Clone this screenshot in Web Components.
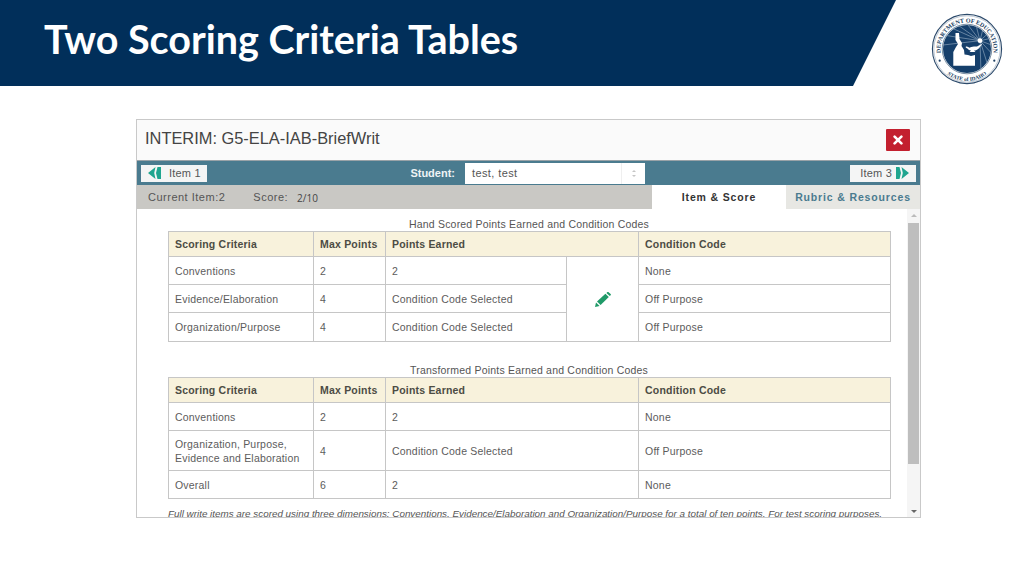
<!DOCTYPE html>
<html lang="en">
<head>
<meta charset="utf-8">
<title>Two Scoring Criteria Tables</title>
<style>
  html, body { margin: 0; padding: 0; background: #fff; }
  body { width: 1024px; height: 576px; overflow: hidden; font-family: "Liberation Sans", Arial, sans-serif; }
  main { display: block; padding: 33px 0 0 136px; }
</style>
</head>
<body>
<slide-header>Two Scoring Criteria Tables</slide-header>
<main>
  <scoring-window title-text="INTERIM: G5-ELA-IAB-BriefWrit">
    <score-table edit-cell data-rows='[["Conventions","2","2","None",28],["Evidence/Elaboration","4","Condition Code Selected","Off Purpose",28],["Organization/Purpose","4","Condition Code Selected","Off Purpose",29]]'>Hand Scored Points Earned and Condition Codes</score-table>
    <score-table class="second" data-rows='[["Conventions","2","2","None",28],["Organization, Purpose,<br>Evidence and Elaboration","4","Condition Code Selected","Off Purpose",40],["Overall","6","2","None",28]]'>Transformed Points Earned and Condition Codes</score-table>
    <p slot="note">Full write items are scored using three dimensions: Conventions, Evidence/Elaboration and Organization/Purpose for a total of ten points. For test scoring purposes,</p>
  </scoring-window>
</main>

<script>
const headerTemplate = document.createElement('template');
headerTemplate.innerHTML = `
  <style>
    :host { display: flex; width: 1024px; height: 86px; }
    .band {
      flex: 0 0 896px;
      box-sizing: border-box;
      padding: 14px 0 0 44px;
      background: #012f5a;
      color: #fff;
      clip-path: polygon(0 0, 100% 0, 853px 100%, 0 100%);
      font: 700 39.5px/50px Lato, sans-serif;
    }
    idaho-seal { margin: 13px 0 0 35px; }
  </style>
  <div class="band"><slot></slot></div>
  <idaho-seal></idaho-seal>
`;

class SlideHeader extends HTMLElement {
  constructor() {
    super();
    this.attachShadow({ mode: 'open' });
    this.shadowRoot.appendChild(headerTemplate.content.cloneNode(true));
  }
}

const sealTemplate = document.createElement('template');
sealTemplate.innerHTML = `
  <style>
    :host { display: block; width: 72px; height: 72px; }
    svg { display: block; }
    text { font-family: "Liberation Serif", serif; font-weight: 700; fill: #1d3f63; }
  </style>
  <svg width="72" height="72" viewBox="0 0 72 72">
    <defs>
      <path id="arc-top" d="M10.4 42.9 A26.5 26.5 0 1 1 61.6 42.9"/>
      <path id="arc-bottom" d="M12.2 57.4 A32 32 0 0 0 59.8 57.4"/>
      <clipPath id="disc"><circle cx="36" cy="36" r="24"/></clipPath>
    </defs>
    <circle cx="36" cy="36" r="34.6" fill="#fff" stroke="#2c4a6b" stroke-width="1.1"/>
    <circle cx="36" cy="36" r="33.2" fill="none" stroke="#7f93a8" stroke-width=".5"/>
    <text font-size="6.1"><textPath href="#arc-top" startOffset="50%" text-anchor="middle">DEPARTMENT OF EDUCATION</textPath></text>
    <text font-size="5.4"><textPath href="#arc-bottom" startOffset="50%" text-anchor="middle">STATE of IDAHO</textPath></text>
    <circle cx="8.7" cy="47.7" r="1.1" fill="#1d3f63"/>
    <circle cx="63.3" cy="47.7" r="1.1" fill="#1d3f63"/>
    <circle cx="36" cy="36" r="24.8" fill="#fff" stroke="#1d3f63" stroke-width=".6"/>
    <circle cx="36" cy="36" r="24" fill="#153f6b"/>
    <g clip-path="url(#disc)" stroke="#a9bdd0" stroke-width=".55">
      <path d="M49 27.7 L14 12 M49 27.7 L24 10 M49 27.7 L34 8 M49 27.7 L44 8 M49 27.7 L54 8 M49 27.7 L64 14 M49 27.7 L66 24 M49 27.7 L66 34 M49 27.7 L64 44 M49 27.7 L58 56 M49 27.7 L50 60 M49 27.7 L12 22 M49 27.7 L12 32"/>
    </g>
    <circle cx="49" cy="27.7" r="2.4" fill="#fff"/>
    <path d="M24.5 20 L28 20 L28.5 26 L31 30 L30.5 33 L33 37 L33.5 41.5 L37 42 L40 43 L44 42 L44 52.7 L22.3 52.7 L22.3 39 L25 34 L27 31 L24.5 27 Z" fill="#fff"/>
    <path d="M34.5 34 C36.5 32.6 37.5 35 39 34.6 C41 33.4 44 33.6 46 33.6 L51.5 30.6 L48 35.2 C46.5 36.8 44.5 37.6 43 37.6 L44.5 39 L38.5 39 L40 37.5 C38 37 37 36.2 36.4 35.4 C35.8 35 35 35 34.5 34 Z" fill="#fff"/>
  </svg>
`;

class IdahoSeal extends HTMLElement {
  constructor() {
    super();
    this.attachShadow({ mode: 'open' });
    this.shadowRoot.appendChild(sealTemplate.content.cloneNode(true));
  }
}

const itemButtonTemplate = document.createElement('template');
itemButtonTemplate.innerHTML = `
  <style>
    :host { display: block; width: 66px; height: 17px; }
    button {
      display: flex;
      align-items: center;
      gap: 8px;
      width: 100%;
      height: 100%;
      padding: 0 0 0 7px;
      border: 0;
      background: #f4f5f5;
      color: #555;
      font: 11px "Liberation Sans", sans-serif;
      letter-spacing: .2px;
      white-space: nowrap;
    }
    :host([dir-next]) button { justify-content: flex-end; gap: 4px; padding: 0 7px 0 0; }
    svg { flex: none; }
  </style>
  <button><slot></slot></button>
`;

class ItemButton extends HTMLElement {
  constructor() {
    super();
    this.attachShadow({ mode: 'open' });
    this.shadowRoot.appendChild(itemButtonTemplate.content.cloneNode(true));
    const next = this.hasAttribute('dir-next');
    const arrows = next
      ? '<path d="M0 0 L3.5 0 L5 6 L3.5 12 L0 12 Z M5.5 0 L13 6 L5.5 12 L6.8 6 Z"/>'
      : '<path d="M13 0 L9.5 0 L8 6 L9.5 12 L13 12 Z M7.5 0 L0 6 L7.5 12 L6.2 6 Z"/>';
    const icon = `<svg width="13" height="12" viewBox="0 0 13 12" fill="#1fa58f">${arrows}</svg>`;
    this.shadowRoot.querySelector('button').insertAdjacentHTML(next ? 'beforeend' : 'afterbegin', icon);
  }
}

const windowTemplate = document.createElement('template');
windowTemplate.innerHTML = `
  <style>
    :host {
      display: flex;
      flex-direction: column;
      box-sizing: border-box;
      width: 785px;
      height: 399px;
      border: 1px solid #c9c9c9;
      overflow: hidden;
      color: #555;
      font-family: "Liberation Sans", sans-serif;
    }
    .title {
      display: flex;
      justify-content: space-between;
      align-items: center;
      flex: 0 0 41px;
      box-sizing: border-box;
      padding: 0 10px 4px 8px;
      background: #fafafa;
      border-bottom: 1px solid #9aa3a8;
    }
    h2 { margin: 0; font-size: 16.4px; font-weight: 400; color: #444; }
    .close {
      display: flex;
      align-items: center;
      justify-content: center;
      width: 24px;
      height: 22px;
      margin-top: 3px;
      background: #c3202f;
      border-radius: 1px;
    }
    .nav {
      display: flex;
      align-items: center;
      flex: 0 0 24px;
      padding: 0 4px;
      background: #4a7b8f;
    }
    .student {
      margin-left: auto;
      color: #eef3f5;
      font-size: 11px;
      font-weight: 700;
    }
    .input {
      display: flex;
      align-items: center;
      justify-content: space-between;
      box-sizing: border-box;
      width: 180px;
      height: 21px;
      margin: 0 205px 0 10px;
      padding: 0 0 0 7px;
      background: #fff;
      font-size: 11px;
      letter-spacing: .4px;
    }
    .spin {
      display: flex;
      flex-direction: column;
      align-items: center;
      justify-content: center;
      gap: 3px;
      width: 24px;
      height: 100%;
      box-sizing: border-box;
      border-left: 1px solid #efefef;
    }
    .spin i { display: block; width: 0; height: 0; border: solid transparent; border-width: 2px 2.5px 0; border-top-color: #c6c6c6; }
    .spin i:first-child { border-width: 0 2.5px 2px; border-bottom-color: #c6c6c6; }
    .status {
      display: flex;
      align-items: stretch;
      flex: 0 0 24px;
      background: #c9c8c4;
      font-size: 11px;
      letter-spacing: .5px;
    }
    .status .facts { display: flex; align-items: center; flex: 1; padding-left: 11px; }
    .status .score-label { margin-left: 28px; }
    .status .score { margin: 2px 0 0 9px; font: 10px "Open Sans", sans-serif; color: #444; letter-spacing: 0; }
    .tab {
      display: flex;
      align-items: center;
      justify-content: center;
      width: 134px;
      font-weight: 700;
      font-size: 10.5px;
      letter-spacing: .85px;
    }
    .tab.on { background: #fff; color: #333; }
    .tab.off { background: #e7e7e3; color: #4a7b8f; }
    .body { display: flex; flex: 1; min-height: 0; }
    .content { flex: 1; min-width: 0; padding: 9px 0 0 31px; overflow: hidden; }
    ::slotted(score-table) { margin-bottom: 22px; }
    ::slotted(p) {
      margin: -13px 0 0;
      width: 730px;
      white-space: nowrap;
      font-size: 9.85px;
      font-style: italic;
      line-height: 12px;
    }
    .track {
      display: flex;
      flex-direction: column;
      align-items: center;
      flex: 0 0 13px;
      background: #f5f5f5;
      padding-top: 5px;
    }
    .up, .down { width: 0; height: 0; border: solid transparent; border-width: 0 3px; flex: none; }
    .up { border-bottom: 3px solid #bbb; }
    .down { margin-top: auto; margin-bottom: 4px; border-width: 3px 3px 0; border-top-color: #666; }
    .thumb { flex: 0 0 241px; align-self: stretch; margin: 6px 1px 0 1px; background: #bebebe; }
  </style>
  <div class="title">
    <h2></h2>
    <div class="close">
      <svg width="10" height="10" viewBox="0 0 10 10"><path d="M1.6 1.6 L8.4 8.4 M8.4 1.6 L1.6 8.4" stroke="#fff" stroke-width="2.6" stroke-linecap="round"/></svg>
    </div>
  </div>
  <div class="nav">
    <item-button>Item 1</item-button>
    <span class="student">Student:</span>
    <div class="input"><span>test, test</span><span class="spin"><i></i><i></i></span></div>
    <item-button dir-next>Item 3</item-button>
  </div>
  <div class="status">
    <div class="facts"><span>Current Item:2</span><span class="score-label">Score:</span><span class="score">2/10</span></div>
    <div class="tab on">Item &amp; Score</div>
    <div class="tab off">Rubric &amp; Resources</div>
  </div>
  <div class="body">
    <div class="content"><slot></slot><slot name="note"></slot></div>
    <div class="track"><span class="up"></span><span class="thumb"></span><span class="down"></span></div>
  </div>
`;

class ScoringWindow extends HTMLElement {
  constructor() {
    super();
    this.attachShadow({ mode: 'open' });
    this.shadowRoot.appendChild(windowTemplate.content.cloneNode(true));
  }

  connectedCallback() {
    this.shadowRoot.querySelector('h2').textContent = this.getAttribute('title-text');
  }
}

const tableTemplate = document.createElement('template');
tableTemplate.innerHTML = `
  <style>
    :host { display: block; width: 722px; color: #5c5c5c; font-family: "Liberation Sans", sans-serif; }
    .caption {
      height: 13px;
      text-align: center;
      font-size: 10.5px;
      line-height: 12px;
      letter-spacing: .2px;
      color: #555;
    }
    table { width: 722px; table-layout: fixed; border-collapse: collapse; font-size: 10.5px; letter-spacing: .2px; }
    th, td { box-sizing: border-box; padding: 0 6px; border: 1px solid #c6c6c6; text-align: left; line-height: 14px; }
    th { height: 25px; background: #f8f2dc; font-weight: 700; color: #4c4c44; }
    .edit { text-align: center; padding: 0; }
    .edit svg { display: inline-block; vertical-align: middle; }
  </style>
  <div class="caption"><slot></slot></div>
  <table>
    <colgroup><col style="width:145px"><col style="width:72px"><col style="width:181px"><col style="width:72px"><col style="width:252px"></colgroup>
    <thead><tr><th>Scoring Criteria</th><th>Max Points</th><th colspan="2">Points Earned</th><th>Condition Code</th></tr></thead>
    <tbody></tbody>
  </table>
`;

const pencilIcon = `<svg width="16" height="15" viewBox="0 0 16 15" fill="#1f9a68">
  <path d="M0 15 L1 10.6 L4.6 14 Z"/>
  <path d="M2 9.6 L10.4 1.8 L13.8 5 L5.6 13 Z"/>
  <path d="M11.4 .9 L12.2 .2 C12.6 -.1 13.2 -.1 13.6 .2 L15.6 2 C16 2.4 16 3 15.6 3.3 L14.8 4.1 Z"/>
</svg>`;

class ScoreTable extends HTMLElement {
  constructor() {
    super();
    this.attachShadow({ mode: 'open' });
    this.shadowRoot.appendChild(tableTemplate.content.cloneNode(true));
  }

  connectedCallback() {
    const rows = JSON.parse(this.dataset.rows);
    const withEdit = this.hasAttribute('edit-cell');
    const tbody = this.shadowRoot.querySelector('tbody');
    tbody.innerHTML = rows.map((row, i) => {
      const [criteria, max, earned, code, height] = row;
      let pointsCells = `<td colspan="2">${earned}</td>`;
      if (withEdit) {
        pointsCells = `<td>${earned}</td>`;
        // the pencil cell spans every row of the hand scored table
        if (i === 0) pointsCells += `<td class="edit" rowspan="${rows.length}">${pencilIcon}</td>`;
      }
      return `<tr style="height:${height}px"><td>${criteria}</td><td>${max}</td>${pointsCells}<td>${code}</td></tr>`;
    }).join('');
  }
}

customElements.define('idaho-seal', IdahoSeal);
customElements.define('slide-header', SlideHeader);
customElements.define('item-button', ItemButton);
customElements.define('score-table', ScoreTable);
customElements.define('scoring-window', ScoringWindow);
</script>
</body>
</html>
